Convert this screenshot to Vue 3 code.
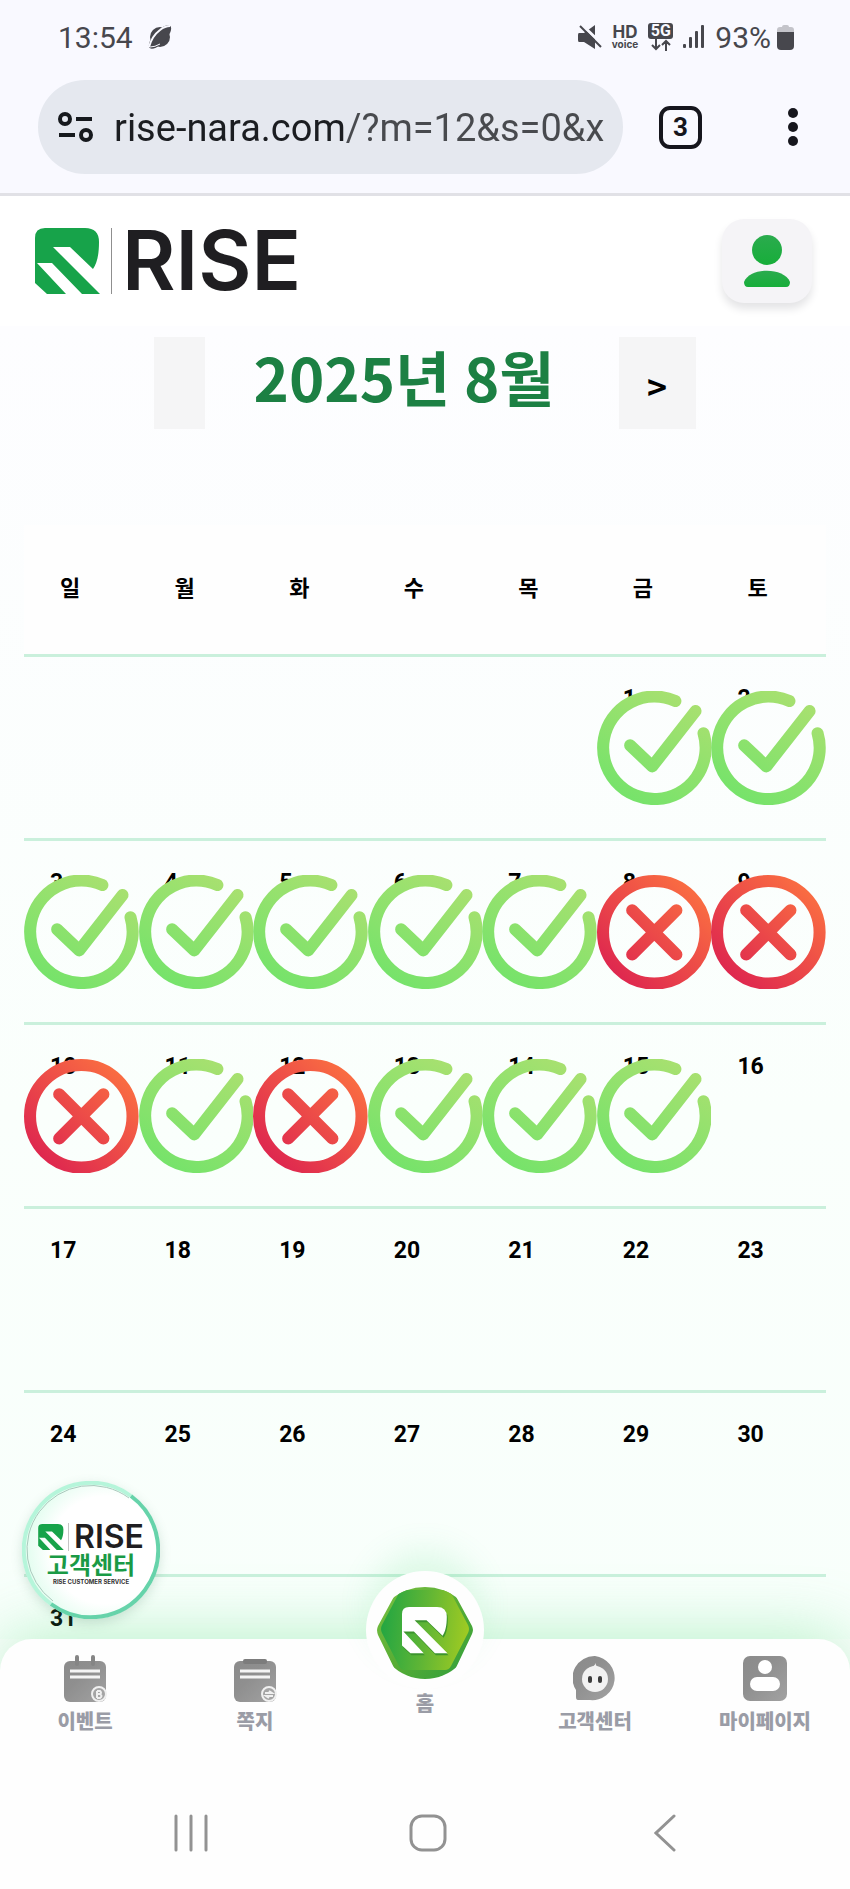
<template>
  <div class="screen">
    <svg class="defs" width="0" height="0" aria-hidden="true">
      <defs>
        <linearGradient id="okGrad" gradientUnits="userSpaceOnUse" x1="23" y1="114" x2="91" y2="0">
          <stop offset="0" stop-color="#72e36a" />
          <stop offset="1" stop-color="#abe070" />
        </linearGradient>
        <linearGradient id="failGrad" gradientUnits="userSpaceOnUse" x1="22" y1="104" x2="100" y2="22">
          <stop offset="0" stop-color="#de274f" />
          <stop offset="1" stop-color="#f96b42" />
        </linearGradient>
        <linearGradient id="grayGrad" x1="0" y1="0" x2="1" y2="1">
          <stop offset="0" stop-color="#8b8b8b" />
          <stop offset="0.4" stop-color="#8f8f8f" />
          <stop offset="1" stop-color="#a2a2a2" />
        </linearGradient>
        <linearGradient id="userGrad" x1="0" y1="0" x2="0" y2="1">
          <stop offset="0" stop-color="#2bab4e" />
          <stop offset="1" stop-color="#17ae3a" />
        </linearGradient>
        <linearGradient id="hexGrad" x1="0" y1="0.4" x2="1" y2="0.5">
          <stop offset="0" stop-color="#23a642" />
          <stop offset="0.5" stop-color="#5fb535" />
          <stop offset="1" stop-color="#a0cb22" />
        </linearGradient>
        <linearGradient id="hexEdge" x1="0" y1="0" x2="1" y2="1">
          <stop offset="0" stop-color="#7cc242" />
          <stop offset="0.5" stop-color="#58ad35" />
          <stop offset="1" stop-color="#2f9e3c" />
        </linearGradient>
        <path
          id="riseMark"
          d="M0 10Q0 0 10 0H50Q64 0 64 14C64 27 62 35 58 41L35 19H18L65 66H47L17 35H2L31 66H12L0 55Z"
        />
      </defs>
    </svg>

    <div class="browser">
      <div class="status">
        <span class="clock">13:54</span>
        <svg class="planet" width="26" height="26" viewBox="0 0 26 26">
          <circle cx="13" cy="13" r="10" fill="#47474d" />
          <ellipse cx="13" cy="13" rx="15" ry="6" transform="rotate(-47 13 13)" fill="#47474d" />
          <path d="M2 23Q5 12 13 6Q18 2 23 2" fill="none" stroke="#f9f9ff" stroke-width="2" />
          <path d="M3 23Q8 23 13 20" fill="none" stroke="#f9f9ff" stroke-width="1" />
        </svg>
        <div class="indicators">
          <svg width="24" height="24" viewBox="0 0 24 24">
            <path d="M1 8H6L17 0V24L6 17H1Q0 17 0 15V10Q0 8 1 8Z" fill="#47474d" />
            <path d="M3 -1L26 21" stroke="#f9f9ff" stroke-width="3" />
            <path d="M2 1L23 22" stroke="#47474d" stroke-width="2" />
          </svg>
          <span class="hd"><b>HD</b><i>voice</i></span>
          <span class="fiveg">
            <b>5G</b>
            <svg width="20" height="12" viewBox="0 0 20 12" fill="none" stroke="#47474d" stroke-width="2">
              <path d="M5 0V10M1 6L5 10L9 6M15 12V2M11 6L15 2L19 6" />
            </svg>
          </span>
          <svg width="22" height="24" viewBox="0 0 22 24" fill="#47474d">
            <rect x="0" y="19" width="3" height="4" rx="1" />
            <rect x="6" y="12" width="3" height="11" rx="1" />
            <rect x="12" y="6" width="3" height="17" rx="1" />
            <rect x="18" y="0" width="3" height="23" rx="1" />
          </svg>
          <span class="percent">93%</span>
          <svg class="battery" width="17" height="25" viewBox="0 0 17 25">
            <path d="M5 2Q5 0 7 0H10Q12 0 12 2H14Q17 2 17 5V12H0V5Q0 2 3 2Z" fill="#c4c4ca" />
            <path d="M0 7H17V21Q17 25 13 25H4Q0 25 0 21Z" fill="#47474d" />
          </svg>
        </div>
      </div>
      <div class="toolbar">
        <div class="address">
          <svg width="36" height="30" viewBox="0 0 36 30" fill="none" stroke="#16191d" stroke-width="4">
            <circle cx="7" cy="7" r="5" />
            <circle cx="28" cy="23" r="5" />
            <path d="M18 7H34M1 23H17" />
          </svg>
          <input type="text" aria-label="주소" :value="url" readonly />
        </div>
        <button class="tabs" type="button" aria-label="탭">3</button>
        <button class="more" type="button" aria-label="메뉴">
          <svg width="10" height="38" viewBox="0 0 10 38" fill="#16161d">
            <circle cx="5" cy="5" r="5" />
            <circle cx="5" cy="19" r="5" />
            <circle cx="5" cy="33" r="5" />
          </svg>
        </button>
      </div>
    </div>

    <header class="header">
      <a class="logo" href="#">
        <svg width="65" height="66" viewBox="0 0 65 66"><use href="#riseMark" fill="#17a34a" /></svg>
        <span class="wordmark">RISE</span>
      </a>
      <button class="profile" type="button" aria-label="프로필">
        <svg width="46" height="52" viewBox="0 0 46 52" fill="url(#userGrad)">
          <circle cx="23" cy="15" r="15" />
          <path d="M4 52Q0 52 0 47C6 32 40 32 46 47Q46 52 42 52Z" />
        </svg>
      </button>
    </header>

    <main>
      <div class="month">
        <button class="prev" type="button" aria-label="이전 달"></button>
        <h1>2025년 8월</h1>
        <button class="next" type="button" aria-label="다음 달">&gt;</button>
      </div>

      <table class="calendar">
        <thead>
          <tr>
            <th v-for="name in weekdays" :key="name">{{ name }}</th>
          </tr>
        </thead>
        <tbody>
          <tr v-for="(week, w) in weeks" :key="w">
            <td v-for="(day, d) in week" :key="d">
              <template v-if="day">
                {{ day }}
                <svg v-if="marks[day]" class="stamp" viewBox="0 0 114 114" fill="none" stroke-width="12" stroke-linecap="round">
                  <g v-if="marks[day] === 'ok'" stroke="url(#okGrad)">
                    <path d="M106 42A51 51 0 1 1 78 10" />
                    <path d="M33 54L55 75L98 20" stroke-linejoin="round" />
                  </g>
                  <g v-else stroke="url(#failGrad)">
                    <circle cx="57" cy="57" r="51" />
                    <path d="M35 35L79 79M79 35L35 79" />
                  </g>
                </svg>
              </template>
            </td>
          </tr>
        </tbody>
      </table>
    </main>

    <div class="dock">
      <nav class="menu">
        <a v-for="item in menu" :key="item.id" href="#" :class="['item', item.id]">
          <svg v-if="item.id === 'event'" width="44" height="48" viewBox="0 0 44 48">
            <rect x="1" y="6" width="42" height="41" rx="6" fill="url(#grayGrad)" />
            <path d="M14 2V9M30 2V9" stroke="#858585" stroke-width="4" stroke-linecap="round" />
            <path d="M7 16H37M7 22H37" stroke="#f4f4f4" stroke-width="3" />
            <circle cx="36" cy="39" r="7" fill="#a5a5a5" stroke="#f0f0f0" stroke-width="2" />
            <path d="M34 36V43M34 36H37Q39 38 37 39H34M37 39Q40 41 37 43H34" fill="none" stroke="#f0f0f0" stroke-width="2" />
          </svg>
          <svg v-else-if="item.id === 'memo'" width="44" height="48" viewBox="0 0 44 48">
            <rect x="1" y="6" width="42" height="41" rx="6" fill="url(#grayGrad)" />
            <rect x="10" y="4" width="24" height="5" rx="2" fill="#7c7c7c" />
            <path d="M7 16H37M7 22H37" stroke="#f4f4f4" stroke-width="3" />
            <circle cx="36" cy="39" r="7" fill="#a5a5a5" stroke="#f0f0f0" stroke-width="2" />
            <path d="M32 38H39L36 36M40 41H33L36 43" fill="none" stroke="#f0f0f0" stroke-width="2" />
          </svg>
          <svg v-else-if="item.id === 'home'" width="96" height="92" viewBox="0 0 96 92">
            <path d="M26 0H70Q74 0 76 4L95 39Q97 43 95 47L76 87Q73 92 68 92H28Q23 92 20 87L1 48Q-1 43 1 39L20 4Q22 0 26 0Z" fill="url(#hexEdge)" />
            <path d="M27 3H69Q72 3 74 6L91 38Q93 42 91 46L74 79Q72 83 68 83H28Q24 83 22 79L5 46Q3 42 5 38L22 6Q24 3 27 3Z" fill="url(#hexGrad)" />
            <use href="#riseMark" fill="#3d942e" transform="translate(26 22) scale(0.7)" />
            <use href="#riseMark" fill="#ffffff" transform="translate(25 20) scale(0.7)" />
          </svg>
          <svg v-else-if="item.id === 'help'" width="44" height="48" viewBox="0 0 44 48">
            <path d="M22 1A22 22 0 1 1 17 45H5Q3 45 3 42V35A22 22 0 0 1 22 1Z" fill="url(#grayGrad)" />
            <circle cx="22" cy="24" r="13" fill="#f2f2f2" />
            <path d="M16 13Q21 12 23 8Q22 11 26 12V16H16Z" fill="#f2f2f2" />
            <rect x="15" y="21" width="4" height="7" rx="2" fill="#3c3c3c" />
            <rect x="25" y="21" width="4" height="7" rx="2" fill="#3c3c3c" />
          </svg>
          <svg v-else width="44" height="48" viewBox="0 0 44 48">
            <rect x="0" y="1" width="44" height="45" rx="7" fill="url(#grayGrad)" />
            <circle cx="22" cy="12" r="7" fill="#ffffff" />
            <rect x="7" y="22" width="30" height="14" rx="7" fill="#ffffff" />
          </svg>
          <span>{{ item.label }}</span>
        </a>
      </nav>
      <div class="system">
        <button type="button" aria-label="최근 앱">
          <svg width="34" height="38" viewBox="0 0 34 38" stroke="#929292" stroke-width="3" stroke-linecap="round">
            <path d="M2 2V36M17 2V36M32 2V36" />
          </svg>
        </button>
        <button type="button" aria-label="홈 화면">
          <svg width="38" height="38" viewBox="0 0 38 38" fill="none" stroke="#929292" stroke-width="3">
            <rect x="2" y="2" width="34" height="34" rx="11" />
          </svg>
        </button>
        <button type="button" aria-label="뒤로">
          <svg width="22" height="38" viewBox="0 0 22 38" fill="none" stroke="#929292" stroke-width="3" stroke-linecap="round">
            <path d="M20 2L2 19L20 36" />
          </svg>
        </button>
      </div>

      <a class="support" href="#">
        <svg class="ring" width="138" height="138" viewBox="0 0 138 138" fill="none">
          <path d="M29 123A67 67 0 0 1 109 15" stroke="#b5f5da" stroke-width="4" />
          <path d="M31 120A64 64 0 0 1 107 17" stroke="#a9c9bc" stroke-width="1" />
          <path d="M109 15A67 67 0 0 1 29 123" stroke="#66d3aa" stroke-width="4" />
        </svg>
        <span class="brand">
          <svg width="26" height="26" viewBox="0 0 65 66"><use href="#riseMark" fill="#17a34a" /></svg>
          <b>RISE</b>
        </span>
        <strong>고객센터</strong>
        <small>RISE CUSTOMER SERVICE</small>
      </a>
    </div>
  </div>
</template>

<script setup>
const url = 'rise-nara.com/?m=12&s=0&x';

const weekdays = ['일', '월', '화', '수', '목', '금', '토'];

// 2025-08-01 is a Friday
const firstWeekday = 5;
const daysInMonth = 31;
const weeks = [];
for (let start = 1 - firstWeekday; start <= daysInMonth; start += 7) {
    weeks.push(weekdays.map((_, i) => {
        const day = start + i;
        return day >= 1 && day <= daysInMonth ? day : null;
    }));
}

const failed = [8, 9, 10, 12];
const marks = {};
for (let day = 1; day <= 15; day++) {
    marks[day] = failed.includes(day) ? 'fail' : 'ok';
}

const menu = [
    { id: 'event', label: '이벤트' },
    { id: 'memo', label: '쪽지' },
    { id: 'home', label: '홈' },
    { id: 'help', label: '고객센터' },
    { id: 'mypage', label: '마이페이지' }
];
</script>

<style>
body {
  background: #fefefe;
}
</style>

<style scoped>
.screen {
  display: flex;
  flex-direction: column;
  min-height: 100vh;
  overflow: hidden;
  font-family: Roboto, "Noto Sans CJK KR", sans-serif;
  color: #000;
}
.screen * {
  box-sizing: border-box;
}
svg {
  display: block;
  flex: none;
}
.defs {
  position: absolute;
}
button {
  padding: 0;
  border: none;
  background: transparent;
  font-family: inherit;
  color: inherit;
}
a {
  color: inherit;
  text-decoration: none;
}

.browser {
  background: #f9f9ff;
  border-bottom: 3px solid #e1e1e6;
}
.status {
  display: flex;
  align-items: center;
  height: 74px;
  padding: 0 56px 0 58px;
  color: #47474d;
  font-size: 30px;
}
.planet {
  margin-left: 14px;
}
.indicators {
  display: flex;
  align-items: center;
  gap: 10px;
  margin-left: auto;
}
.hd {
  display: flex;
  flex-direction: column;
  align-items: center;
  font-family: Inter, sans-serif;
}
.hd b {
  font-size: 17px;
  line-height: 14px;
}
.hd i {
  font-size: 10px;
  line-height: 10px;
  font-weight: 700;
  font-style: normal;
}
.fiveg {
  display: flex;
  flex-direction: column;
  align-items: center;
}
.fiveg b {
  width: 25px;
  border-radius: 3px;
  background: #47474d;
  color: #f9f9ff;
  font-size: 16px;
  line-height: 16px;
  text-align: center;
}
.battery {
  margin-left: -4px;
}
.toolbar {
  display: flex;
  align-items: center;
  padding: 6px 52px 19px 38px;
}
.address {
  display: flex;
  flex: 1;
  align-items: center;
  gap: 20px;
  min-width: 0;
  height: 94px;
  padding: 0 18px 0 20px;
  border-radius: 47px;
  background: #e5e8ef;
}
.address input {
  flex: 1;
  min-width: 0;
  padding: 2px 0 0;
  border: none;
  outline: none;
  background: linear-gradient(90deg, #1b1d21 232px, #484a4e 232px);
  background-clip: text;
  color: transparent;
  font-family: Roboto, sans-serif;
  font-size: 38px;
  line-height: 50px;
}
.tabs {
  width: 43px;
  height: 43px;
  margin-left: 36px;
  border: 4px solid #16161d;
  border-radius: 11px;
  color: #16161d;
  font-size: 26px;
  font-weight: 700;
  line-height: 34px;
}
.more {
  margin-left: 86px;
}

.header {
  display: flex;
  align-items: center;
  justify-content: space-between;
  height: 130px;
  padding: 0 38px 0 35px;
  background: #fff;
}
.logo {
  display: flex;
  align-items: center;
}
.wordmark {
  margin-left: 11px;
  padding-left: 10px;
  border-left: 1px solid #8f8f8f;
  color: #1f1e21;
  font-family: Inter, sans-serif;
  font-size: 82px;
  font-weight: 600;
  line-height: 66px;
}
.profile {
  display: flex;
  align-items: center;
  justify-content: center;
  width: 90px;
  height: 84px;
  border-radius: 22px;
  background: #f5f4f7;
  box-shadow: 0 6px 8px #e4e4e6;
}

main {
  background: linear-gradient(180deg, #fdfdff, #fafffc 60%, #f8fffb);
}
.month {
  display: flex;
  align-items: flex-start;
  justify-content: center;
  height: 199px;
  padding-top: 11px;
}
.month button {
  height: 92px;
  background: #f5f5f6;
}
.month .prev {
  width: 51px;
}
.month .next {
  width: 77px;
  padding-top: 4px;
  font-family: "Noto Sans CJK KR", sans-serif;
  font-size: 34px;
  font-weight: 700;
}
.month h1 {
  margin: 0 64px 0 48px;
  color: #1c8043;
  font-family: "Noto Sans CJK KR", sans-serif;
  font-size: 60px;
  font-weight: 700;
  line-height: 78px;
}

.calendar {
  width: calc(100% - 48px);
  margin: 0 24px;
  border-collapse: collapse;
  table-layout: fixed;
}
.calendar th {
  height: 130px;
  padding: 0 0 6px 36px;
  border-bottom: 3px solid #caf0dc;
  background: #fefefe;
  font-family: "Noto Sans CJK KR", sans-serif;
  font-size: 22px;
  font-weight: 700;
  text-align: left;
}
.calendar td {
  position: relative;
  height: 184px;
  padding: 29px 0 0 26px;
  border-bottom: 3px solid #caf0dc;
  font-size: 23px;
  font-weight: 700;
  line-height: 26px;
  vertical-align: top;
}
.calendar tbody tr:last-child td {
  height: 64px;
  border-bottom: none;
}
.stamp {
  position: absolute;
  top: 34px;
  left: 0;
  width: 100%;
}

.dock {
  position: relative;
  flex: 1;
  border-radius: 32px 32px 0 0;
  background: #fefefe;
  box-shadow: 0 -4px 64px rgba(90, 220, 130, 0.4);
}
.menu {
  display: flex;
  height: 136px;
  padding-top: 16px;
}
.item {
  display: flex;
  flex: 1;
  flex-direction: column;
  align-items: center;
  gap: 4px;
  color: #9a9ca6;
  font-family: "Noto Sans CJK KR", sans-serif;
  font-size: 20px;
  font-weight: 900;
  line-height: 28px;
}
.item.home {
  gap: 0;
}
.home svg {
  box-sizing: content-box;
  margin-top: -84px;
  padding: 16px 11px 10px;
  border-radius: 59px;
  background: #fefefe;
  box-shadow: 0 -24px 32px -4px rgba(90, 220, 130, 0.16);
}
.system {
  display: flex;
  padding: 39px 66px 37px 72px;
}
.system button {
  display: flex;
  flex: 1;
  justify-content: center;
}

.support {
  position: absolute;
  top: -158px;
  left: 22px;
  display: flex;
  flex-direction: column;
  align-items: center;
  width: 138px;
  height: 138px;
  padding-top: 42px;
  border-radius: 50%;
  background: radial-gradient(circle at 60% 50%, #fff 50%, #e4fdf0 72%);
  box-shadow: 0 4px 12px rgba(60, 120, 90, 0.2);
}
.ring {
  position: absolute;
  top: 0;
  left: 0;
}
.brand {
  display: flex;
  align-items: center;
}
.brand b {
  margin-left: 4px;
  padding-left: 5px;
  border-left: 1px solid #c4c4c4;
  color: #1f1e21;
  font-family: Inter, sans-serif;
  font-size: 32px;
  font-weight: 600;
  line-height: 28px;
}
.support strong {
  color: #199a45;
  font-family: "Noto Sans CJK KR", sans-serif;
  font-size: 24px;
  line-height: 26px;
}
.support small {
  color: #333;
  font-family: Inter, sans-serif;
  font-size: 6px;
  font-weight: 700;
  line-height: 10px;
}
</style>
